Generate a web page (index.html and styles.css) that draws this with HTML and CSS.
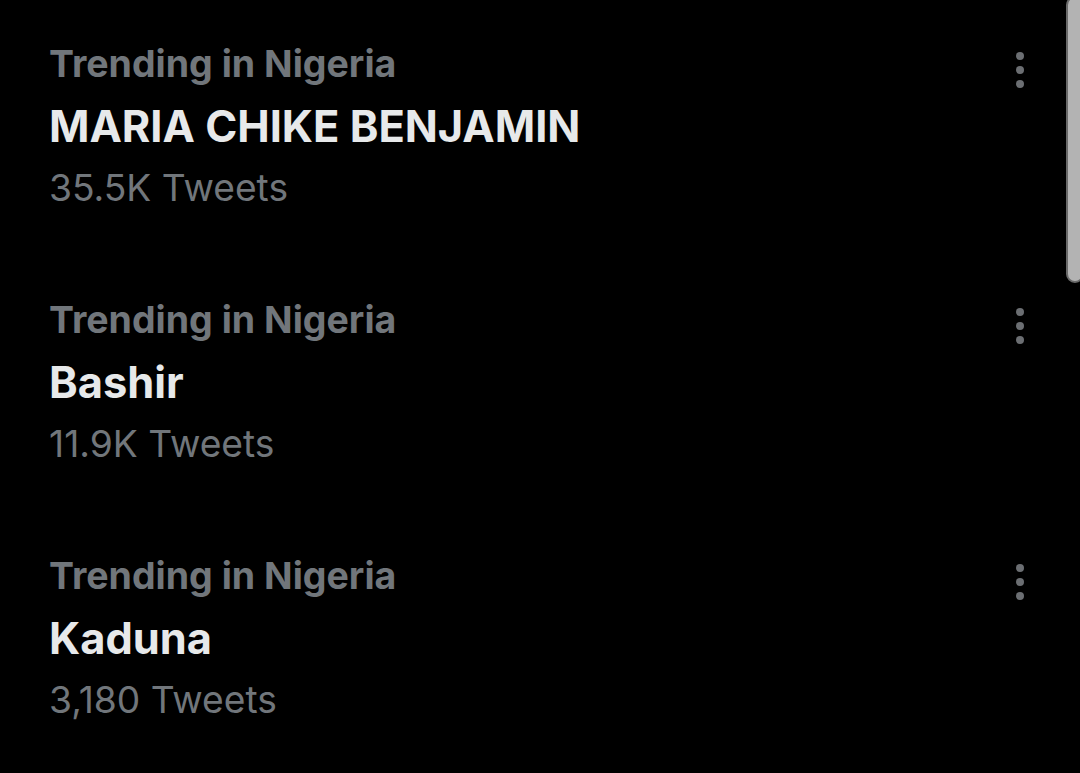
FILE: index.html
```html
<!DOCTYPE html>
<html lang="en">
<head>
    <meta charset="UTF-8">
    <meta name="viewport" content="width=device-width, initial-scale=1.0">
    <title>Trends</title>
    <link rel="stylesheet" href="styles.css">
</head>
<body>

    <div class="trends">
        <div class="trend">
            <div class="trend-text">
                <div class="trend-label">Trending in Nigeria</div>
                <div class="trend-title">MARIA CHIKE BENJAMIN</div>
                <div class="trend-count">35.5K Tweets</div>
            </div>
            <div class="more"><span></span><span></span><span></span></div>
        </div>

        <div class="trend">
            <div class="trend-text">
                <div class="trend-label">Trending in Nigeria</div>
                <div class="trend-title">Bashir</div>
                <div class="trend-count">11.9K Tweets</div>
            </div>
            <div class="more"><span></span><span></span><span></span></div>
        </div>

        <div class="trend">
            <div class="trend-text">
                <div class="trend-label">Trending in Nigeria</div>
                <div class="trend-title">Kaduna</div>
                <div class="trend-count">3,180 Tweets</div>
            </div>
            <div class="more"><span></span><span></span><span></span></div>
        </div>
    </div>

    <!-- scrollbar thumb -->
    <div class="scroll-thumb"></div>

</body>
</html>
```

FILE: styles.css
```css
body {
    margin: 0;
    padding: 0;
    background: #000;
    font-family: Inter, "Liberation Sans", sans-serif;
    height: 773px;
    overflow: hidden;
}
.trends {
    display: flex;
    flex-direction: column;
}
.trend {
    height: 256px;
    box-sizing: border-box;
    padding: 39px 0 0 49px;
    display: flex;
    justify-content: space-between;
}
.trend-label {
    color: #71767b;
    font-size: 37.5px;
    font-weight: 700;
    line-height: 50px;
}
.trend-title {
    color: #e7e9ea;
    font-size: 43.4px;
    font-weight: 700;
    line-height: 62px;
    margin-top: 6px;
}
.trend-count {
    color: #71767b;
    font-size: 37.2px;
    line-height: 62px;
}
.more {
    width: 8px;
    margin: 13px 56px 0 0;
    display: flex;
    flex-direction: column;
    gap: 6px;
}
.more span {
    width: 8px;
    height: 8px;
    border-radius: 50%;
    background: #6b6e72;
}
.scroll-thumb {
    position: absolute;
    top: -4px;
    right: -4px;
    width: 14px;
    height: 283px;
    background: #b3b3b3;
    border: 2px solid #6a6a6a;
    border-radius: 12px;
}
```
